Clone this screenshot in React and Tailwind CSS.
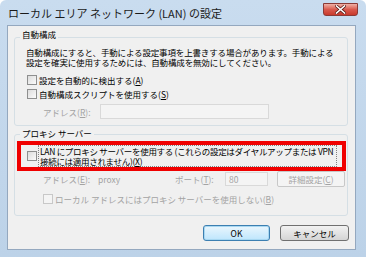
import React from "react";

function Check({ disabled = false, className = "" }) {
  return (
    <span
      className={
        "inline-block w-[10px] h-[10px] shrink-0 border " +
        (disabled
          ? "border-[#c8c8c8] bg-[#f4f4f4] "
          : "border-[#8e8f8f] bg-gradient-to-br from-[#dcdcdc] to-[#fbfbfb] ") +
        className
      }
    />
  );
}

export default function App() {
  return (
    <div className="w-[366px] h-[257px] flex flex-col pl-[7px] pr-[10px] pb-[7px] bg-gradient-to-b from-[#c9dcef] to-[#bcd2e8] rounded-t-[6px] font-['Noto_Sans_CJK_JP','Noto_Sans',sans-serif] text-black overflow-hidden">
      {/* title bar */}
      <div className="h-[25px] flex items-start justify-between shrink-0">
        <div className="text-[11px] leading-[12px] mt-[7px] ml-[1px] text-[#1a1a1a] whitespace-nowrap">
          ローカル エリア ネットワーク (LAN) の設定
        </div>
        <div className="mt-[3px] mr-[-2px] w-[35px] h-[13px] rounded-b-[3px] border border-[#8b3a36] bg-gradient-to-b from-[#eeb0a6] via-[#d9594d] to-[#c8392c] flex items-center justify-center">
          <svg width="11" height="9" viewBox="0 0 11 9">
            <path d="M1.5 1 L9.5 8 M9.5 1 L1.5 8" stroke="#5a1c18" strokeWidth="3" strokeLinecap="square" />
            <path d="M1.5 1 L9.5 8 M9.5 1 L1.5 8" stroke="#ffffff" strokeWidth="1.6" strokeLinecap="square" />
          </svg>
        </div>
      </div>

      {/* client */}
      <div className="flex-1 bg-[#f0f0f0] border border-[#94a8bf] flex flex-col text-[8.5px] leading-[10px]">
        {/* group 1 */}
        <div className="ml-[6px] mt-[11px] w-[334px] border border-[#d5dfe5] rounded-[3px] flex flex-col pb-[6px]">
          <div className="-mt-[9px] ml-[5px] px-[2px] w-fit bg-[#f0f0f0] h-[10px]">自動構成</div>
          <div className="mt-[8px] ml-[11px] w-[312px] tracking-[-0.15px]">
            <div className="whitespace-nowrap">自動構成にすると、手動による設定事項を上書きする場合があります。手動による</div>
            <div className="whitespace-nowrap">設定を確実に使用するためには、自動構成を無効にしてください。</div>
          </div>
          <div className="mt-[6px] ml-[12px] h-[14px] flex items-center gap-[2px]">
            <Check />
            <span>設定を自動的に検出する(<u>A</u>)</span>
          </div>
          <div className="ml-[12px] h-[14px] flex items-center gap-[2px]">
            <Check />
            <span>自動構成スクリプトを使用する(<u>S</u>)</span>
          </div>
          <div className="mt-[3px] ml-[28px] h-[15px] flex items-center">
            <span className="text-[#a3a3a3] w-[57px]">アドレス(<u>R</u>):</span>
            <div className="w-[169px] h-[15px] border border-[#d9d9d9] bg-[#f4f4f4]" />
          </div>
        </div>

        {/* group 2 */}
        <div className="ml-[6px] mt-[8px] w-[334px] border border-[#d5dfe5] rounded-[3px] flex flex-col pb-[9px]">
          <div className="-mt-[7px] ml-[5px] px-[2px] w-fit bg-[#f0f0f0] h-[10px]">プロキシ サーバー</div>
          <div className="mt-[3px] ml-[2px] w-[329px] h-[30px] border-[4px] border-[#f00000] flex items-center pl-[6px]">
            <Check />
            <div className="ml-[1px] w-[299px] h-[22px] border border-dotted border-[#808080] pl-[1px] text-[8.5px] leading-[10px] tracking-[-0.3px]">
              <div className="whitespace-nowrap">LAN にプロキシ サーバーを使用する (これらの設定はダイヤルアップまたは VPN</div>
              <div className="whitespace-nowrap">接続には適用されません)(<u>X</u>)</div>
            </div>
          </div>
          <div className="mt-[0px] ml-[28px] h-[16px] flex items-center text-[#a3a3a3]">
            <span className="w-[54px]">アドレス(<u>E</u>):</span>
            <div className="w-[78px] h-[14px] flex items-center pl-[1px]">proxy</div>
            <span className="w-[50px]">ポート(<u>T</u>):</span>
            <div className="w-[43px] h-[14px] border border-[#d9d9d9] bg-[#f4f4f4] flex items-center pl-[3px]">80</div>
            <div className="ml-[9px] w-[68px] h-[16px] border border-[#c8c8c8] rounded-[2px] bg-[#f4f4f4] flex items-center justify-center">
              詳細設定(<u>C</u>)
            </div>
          </div>
          <div className="mt-[5px] ml-[28px] h-[14px] flex items-center gap-[2px] text-[#a3a3a3]">
            <Check disabled />
            <span>ローカル アドレスにはプロキシ サーバーを使用しない(<u>B</u>)</span>
          </div>
        </div>

        {/* buttons */}
        <div className="mt-[9px] flex justify-end gap-[10px] pr-[6px]">
          <div className="w-[67px] h-[16px] rounded-[3px] border border-[#3c7fb1] bg-gradient-to-b from-[#eaf6fd] to-[#bee6fd] flex items-center justify-center shadow-[inset_0_0_0_1px_#a8d8f2]">
            OK
          </div>
          <div className="w-[69px] h-[16px] rounded-[3px] border border-[#707070] bg-gradient-to-b from-[#f2f2f2] to-[#d5d5d5] flex items-center justify-center">
            キャンセル
          </div>
        </div>
      </div>
    </div>
  );
}
